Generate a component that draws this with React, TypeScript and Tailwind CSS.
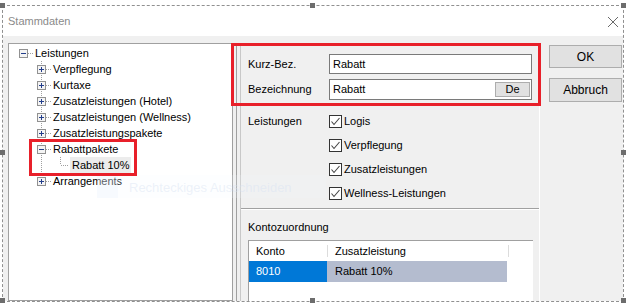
const FONT = "font-['Liberation_Sans',Arial,sans-serif]";
const DOT = '#a0a0a0';

function Box({ x, open }: { x: number; open: boolean }) {
  return (
    <>
      <rect x={x + 0.5} y={4.5} width={8} height={8} fill="#f4f4f4" stroke="#919191" />
      <line x1={x + 2} y1={8.5} x2={x + 7} y2={8.5} stroke="#233e8b" />
      {!open && <line x1={x + 4.5} y1={6} x2={x + 4.5} y2={11} stroke="#233e8b" />}
    </>
  );
}

function TreeRow({
  level,
  label,
  open,
  last,
  leaf,
  selected,
}: {
  level: 0 | 1 | 2;
  label: string;
  open?: boolean;
  last?: boolean;
  leaf?: boolean;
  selected?: boolean;
}) {
  const w = level === 0 ? 26 : level === 1 ? 44 : 61;
  return (
    <div className="flex h-[16px] items-center">
      <svg width={w} height={16} className="shrink-0">
        {level >= 1 && (
          <line x1={32.5} y1={0} x2={32.5} y2={last ? 8 : 16} stroke={DOT} strokeDasharray="1 1" />
        )}
        {level === 0 && (
          <>
            <line x1={19} y1={8.5} x2={25} y2={8.5} stroke={DOT} strokeDasharray="1 1" />
            <Box x={10} open={!!open} />
          </>
        )}
        {level === 1 && (
          <>
            <line x1={37} y1={8.5} x2={43} y2={8.5} stroke={DOT} strokeDasharray="1 1" />
            <Box x={28} open={!!open} />
          </>
        )}
        {level === 2 && leaf && (
          <>
            <line x1={51.5} y1={0} x2={51.5} y2={8} stroke={DOT} strokeDasharray="1 1" />
            <line x1={52} y1={8.5} x2={60} y2={8.5} stroke={DOT} strokeDasharray="1 1" />
          </>
        )}
      </svg>
      <span
        className={
          selected
            ? 'flex h-[16px] items-center bg-[#ececec] px-[2px] text-[11px] text-black'
            : 'text-[11px] leading-[16px] text-black'
        }
      >
        {label}
      </span>
    </div>
  );
}

function Check({ label }: { label: string }) {
  return (
    <div className="flex h-[13px] items-center">
      <div className="flex h-[13px] w-[13px] shrink-0 items-center justify-center border border-[#333333] bg-white">
        <svg width={11} height={11}>
          <polyline points="1.5,5.5 4,8.5 9.5,2" fill="none" stroke="#444444" strokeWidth={1.1} />
        </svg>
      </div>
      <span className="ml-[2px] text-[11px] leading-[13px] text-black">{label}</span>
    </div>
  );
}

function Field({ label, value, lang }: { label: string; value: string; lang?: boolean }) {
  return (
    <div className="flex items-center">
      <span className="w-[81px] shrink-0 text-[11px] text-black">{label}</span>
      <div
        className={
          'flex w-[203px] items-center justify-between border border-[#7a7a7a] bg-white pl-[3px] ' +
          (lang ? 'h-[21px] pr-[1px]' : 'h-[20px]')
        }
      >
        <span className="text-[11px] text-black">{value}</span>
        {lang && (
          <div className="flex h-[15px] w-[35px] items-center justify-center border border-[#adadad] bg-[#e1e1e1] text-[11px] text-black">
            De
          </div>
        )}
      </div>
    </div>
  );
}

export default function App() {
  const handles = [
    'left-0 top-[3px]',
    'left-[310px] top-[3px]',
    'left-[621px] top-[3px]',
    'left-0 top-[150px]',
    'left-[621px] top-[150px]',
    'left-0 top-[298px]',
    'left-[310px] top-[298px]',
    'left-[621px] top-[298px]',
  ];

  return (
    <div className={`relative h-[307px] w-[628px] overflow-hidden bg-white ${FONT}`}>
      <div className="ml-[2px] mt-[5px] flex h-[297px] w-[622px] flex-col border border-dashed border-[#909090]">
        {/* title bar */}
        <div className="flex h-[30px] shrink-0 items-center justify-between bg-white pl-[5px] pr-[3px] pt-[1px]">
          <span className="text-[11px] text-[#8a8a8a]">Stammdaten</span>
          <svg width={12} height={12} className="mr-[1px]">
            <path d="M1 1 L11 11 M11 1 L1 11" stroke="#6a6a6a" strokeWidth={1} />
          </svg>
        </div>

        {/* body */}
        <div className="flex min-h-0 flex-1 overflow-hidden bg-[#f0f0f0] pl-[5px] pt-[7px]">
          {/* tree */}
          <div className="w-[225px] shrink-0 border border-[#a0a0a0] bg-white pt-[1px]">
            <TreeRow level={0} label="Leistungen" open />
            <TreeRow level={1} label="Verpflegung" />
            <TreeRow level={1} label="Kurtaxe" />
            <TreeRow level={1} label="Zusatzleistungen (Hotel)" />
            <TreeRow level={1} label="Zusatzleistungen (Wellness)" />
            <TreeRow level={1} label="Zusatzleistungspakete" />
            <TreeRow level={1} label="Rabattpakete" open />
            <TreeRow level={2} label="Rabatt 10%" leaf selected />
            <TreeRow level={1} label="Arrangements" last />
          </div>

          {/* right panel */}
          <div className="ml-[3px] flex w-[304px] shrink-0 border-l border-[#a0a0a0] pl-[3px]">
            <div className="flex flex-1 flex-col border-l border-r border-l-[#c8c8c8] border-r-white">
              <div className="flex flex-col gap-[5px] border-b border-[#a0a0a0] pb-[3px] pl-[7px] pt-[11px]">
                <Field label="Kurz-Bez." value="Rabatt" />
                <Field label="Bezeichnung" value="Rabatt" lang />
              </div>

              <div className="flex border-b border-t border-b-[#a0a0a0] border-t-white pb-[8px] pl-[7px] pt-[10px]">
                <span className="w-[81px] shrink-0 text-[11px] leading-[13px] text-black">Leistungen</span>
                <div className="flex flex-col gap-[11px]">
                  <Check label="Logis" />
                  <Check label="Verpflegung" />
                  <Check label="Zusatzleistungen" />
                  <Check label="Wellness-Leistungen" />
                </div>
              </div>

              <div className="flex flex-1 flex-col border-t border-white pl-[7px] pr-[6px] pt-[10px]">
                <span className="text-[11px] leading-[14px] text-black">Kontozuordnung</span>
                <div className="mt-[6px] flex-1 border-l border-t border-[#a0a0a0] bg-white">
                  <div className="flex h-[20px] items-center text-[11px] text-black">
                    <span className="w-[78px] pl-[7px]">Konto</span>
                    <span className="h-[12px] w-px bg-[#dcdcdc]" />
                    <span className="w-[180px] pl-[7px]">Zusatzleistung</span>
                    <span className="h-[12px] w-px bg-[#dcdcdc]" />
                  </div>
                  <div className="flex h-[21px] text-[11px]">
                    <span className="flex w-[78px] items-center bg-[#0078d7] pl-[7px] text-white">8010</span>
                    <span className="flex w-[180px] items-center bg-[#b4bccf] pl-[8px] text-black">Rabatt 10%</span>
                  </div>
                </div>
              </div>
            </div>
          </div>

          {/* buttons */}
          <div className="ml-[9px] flex w-[73px] shrink-0 flex-col">
            <button className="mt-[2px] h-[23px] border border-[#adadad] bg-[#e1e1e1] text-[12px] text-black">OK</button>
            <button className="mt-[10px] h-[24px] border border-[#adadad] bg-[#e1e1e1] text-[12px] text-black">Abbruch</button>
          </div>
        </div>
      </div>

      {/* faint snipping tooltip */}
      <div className="pointer-events-none absolute left-[97px] top-[175px] flex h-[23px] w-[229px] items-center bg-[rgba(246,249,255,0.18)]">
        <span className="h-[23px] w-[21px] bg-[rgba(230,238,250,0.25)]" />
        <span className="ml-[11px] mt-[3px] text-[13px] text-[rgba(215,226,242,0.45)]">Rechteckiges Ausschneiden</span>
      </div>

      {/* red highlight boxes */}
      <div className="pointer-events-none absolute left-[231px] top-[43px] h-[63px] w-[310px] border-[3px] border-[#e8202a]" />
      <div className="pointer-events-none absolute left-[29px] top-[139px] h-[37px] w-[108px] border-[3px] border-[#e8202a]" />

      {/* selection handles */}
      {handles.map((h) => (
        <div key={h} className={`absolute h-[5px] w-[5px] bg-[#6d6d6d] ${h}`} />
      ))}
    </div>
  );
}
